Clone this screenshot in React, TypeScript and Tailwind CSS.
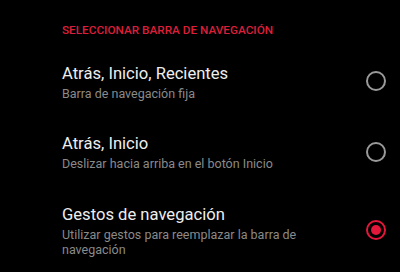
import { useState } from 'react';

interface NavOption {
  id: string;
  title: string;
  subtitle: string;
}

const OPTIONS: NavOption[] = [
  { id: 'three', title: 'Atrás, Inicio, Recientes', subtitle: 'Barra de navegación fija' },
  { id: 'two', title: 'Atrás, Inicio', subtitle: 'Deslizar hacia arriba en el botón Inicio' },
  {
    id: 'gestures',
    title: 'Gestos de navegación',
    subtitle: 'Utilizar gestos para reemplazar la barra de navegación',
  },
];

const Radio = ({ checked }: { checked: boolean }) => (
  <div
    className={`w-[20px] h-[20px] rounded-full border-2 flex items-center justify-center shrink-0 ${
      checked ? 'border-[#e3173a]' : 'border-[#9a9a9a]'
    }`}
  >
    {checked && <div className="w-[10px] h-[10px] rounded-full bg-[#e3173a]" />}
  </div>
);

export default function App() {
  const [selected, setSelected] = useState('gestures');

  return (
    <div
      className="w-[400px] h-[272px] bg-black overflow-hidden pt-[22px]"
      style={{ fontFamily: 'Roboto, "Noto Sans", sans-serif' }}
    >
      <div className="pl-[62px] h-[16px] leading-[16px] text-[11.75px] font-medium text-[#dc1e3a] mb-[8px]">
        SELECCIONAR BARRA DE NAVEGACIÓN
      </div>

      {OPTIONS.map((opt) => (
        <div
          key={opt.id}
          onClick={() => setSelected(opt.id)}
          className="flex items-center pl-[62px] pr-[14px] py-[15.5px] cursor-pointer"
        >
          <div className="flex-1 pr-[60px]">
            <p className="text-[16.6px] leading-[24px] text-[#eeeeee]">{opt.title}</p>
            <p className="text-[12.5px] leading-[15.5px] text-[#8a8a8a]">{opt.subtitle}</p>
          </div>
          <Radio checked={selected === opt.id} />
        </div>
      ))}
    </div>
  );
}
